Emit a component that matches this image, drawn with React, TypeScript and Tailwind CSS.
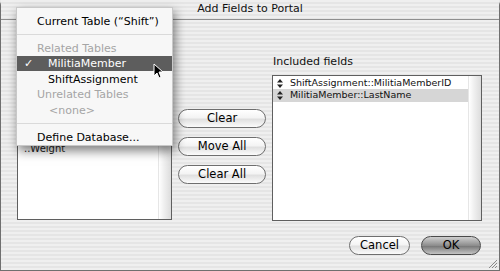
import React from "react";

const stripe =
  "bg-[repeating-linear-gradient(180deg,#efefef_0px,#efefef_2px,#e5e5e5_2px,#e5e5e5_4px)]";

function UpDown() {
  return (
    <svg width="6" height="9" viewBox="0 0 6 9" className="shrink-0">
      <path d="M3 0 L6 3.5 L0 3.5 Z" fill="#222" />
      <path d="M3 9 L6 5.5 L0 5.5 Z" fill="#222" />
    </svg>
  );
}

function PillButton({ label, def }: { label: string; def?: boolean }) {
  return (
    <div
      className={
        def
          ? "h-[19px] rounded-full border border-[#4a4a4a] bg-[linear-gradient(180deg,#cfcfcf_0%,#8d8d8d_50%,#7a7a7a_55%,#c4c4c4_100%)] flex items-center justify-center text-[11.5px] text-black"
          : "h-[19px] rounded-full border border-[#6e6e6e] bg-[linear-gradient(180deg,#ffffff_0%,#f4f4f4_45%,#e0e0e0_55%,#fbfbfb_100%)] flex items-center justify-center text-[11.5px] text-black"
      }
    >
      {label}
    </div>
  );
}

export default function App() {
  return (
    <div
      className="relative w-[500px] h-[271px] overflow-hidden bg-[#e9e9e9]"
      style={{ fontFamily: '"DejaVu Sans", "Liberation Sans", sans-serif' }}
    >
      <div className="flex flex-col w-full h-full border-l border-r border-b border-[#6f6f6f] rounded-t-[5px]">
        {/* Title bar */}
        <div
          className={`h-[20px] shrink-0 flex items-center justify-center border-b border-[#8f8f8f] ${stripe} text-[11px] text-[#111]`}
        >
          Add Fields to Portal
        </div>

        {/* Content */}
        <div className={`flex-1 flex flex-col ${stripe} pl-[16px] pr-[17px]`}>
          <div className="flex mt-[35px]">
            {/* Left column */}
            <div className="w-[156px] flex flex-col">
              <div className="h-[20px]" />
              <div className="h-[145px] border border-[#5f5f5f] bg-white flex">
                <div className="flex-1 pl-[6px] pt-[67px] text-[10px] text-[#222] leading-[12px]">
                  ..Weight
                </div>
                <div className="w-[13px] bg-[linear-gradient(90deg,#ffffff_0%,#f0f0f0_40%,#dcdcdc_100%)] border-l border-[#e6e6e6]" />
              </div>
            </div>

            {/* Middle buttons */}
            <div className="w-[88px] ml-[6px] flex flex-col gap-[9px] pt-[54px]">
              <PillButton label="Clear" />
              <PillButton label="Move All" />
              <PillButton label="Clear All" />
            </div>

            {/* Right column */}
            <div className="w-[211px] ml-[6px] flex flex-col">
              <div className="h-[14px] text-[11px] leading-[14px] pl-[1px] text-[#111]">
                Included fields
              </div>
              <div className="h-[146px] mt-[6px] border border-[#5f5f5f] bg-white flex">
                <div className="flex-1 flex flex-col pt-[1px] text-[9.5px] text-[#111]">
                  <div className="h-[12px] flex items-center gap-[7px] pl-[4px]">
                    <UpDown />
                    <span>ShiftAssignment::MilitiaMemberID</span>
                  </div>
                  <div className="h-[13px] flex items-center gap-[7px] pl-[4px] bg-[#d6d6d6]">
                    <UpDown />
                    <span>MilitiaMember::LastName</span>
                  </div>
                </div>
                <div className="w-[13px] bg-[linear-gradient(90deg,#ffffff_0%,#f0f0f0_40%,#dcdcdc_100%)] border-l border-[#e6e6e6]" />
              </div>
            </div>
          </div>

          {/* Bottom buttons */}
          <div className="flex justify-end gap-[11px] mt-[15px] pr-[1px]">
            <div className="w-[61px]">
              <PillButton label="Cancel" />
            </div>
            <div className="w-[60px]">
              <PillButton label="OK" def />
            </div>
          </div>
        </div>
      </div>

      {/* Resize grip */}
      <svg className="absolute right-[2px] bottom-[2px]" width="11" height="11" viewBox="0 0 11 11">
        <path d="M10 2 L2 10 M10 5 L5 10 M10 8 L8 10" stroke="#8a8a8a" strokeWidth="1" />
      </svg>

      {/* Popup menu */}
      <div className="absolute left-[16px] top-[7px] w-[157px] h-[139px] bg-[#f7f7f7] border border-[#c8c8c8] shadow-[2px_5px_10px_rgba(0,0,0,0.5)] flex flex-col text-[11px] leading-[15px] pt-[5px]">
        <div className="h-[16px] pl-[20px] text-black flex items-center">Current Table (“Shift”)</div>
        <div className="h-[11px] flex items-center">
          <div className="w-full h-px bg-[#dadada]" />
        </div>
        <div className="h-[16px] pl-[20px] text-[#a5a5a5] flex items-center">Related Tables</div>
        <div className="h-[15px] pl-[7px] text-white bg-[#5d5d5d] flex items-center">
          <span className="w-[24px]">✓</span>
          <span>MilitiaMember</span>
        </div>
        <div className="h-[16px] pl-[31px] text-black flex items-center">ShiftAssignment</div>
        <div className="h-[15px] pl-[20px] text-[#a5a5a5] flex items-center">Unrelated Tables</div>
        <div className="h-[16px] pl-[32px] text-[#a5a5a5] flex items-center">&lt;none&gt;</div>
        <div className="h-[11px] flex items-center">
          <div className="w-full h-px bg-[#dadada]" />
        </div>
        <div className="h-[16px] pl-[20px] text-black flex items-center">Define Database...</div>
      </div>

      {/* Cursor */}
      <svg className="absolute left-[153px] top-[63px]" width="11" height="16" viewBox="0 0 11 16">
        <path d="M1 1 L1 13 L4 10 L6 15 L8 14 L6 9 L10 9 Z" fill="#000" stroke="#fff" strokeWidth="1" />
      </svg>
    </div>
  );
}
